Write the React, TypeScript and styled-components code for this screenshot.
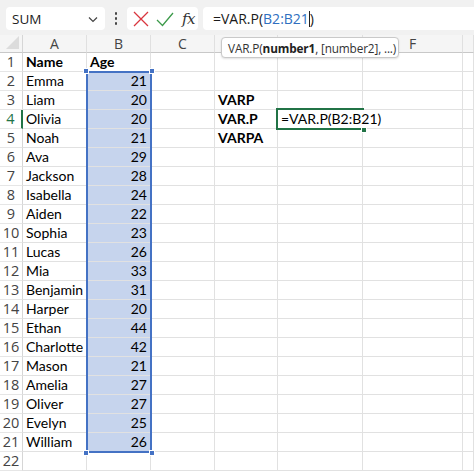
import React from "react";
import styled, { createGlobalStyle } from "styled-components";

const Global = createGlobalStyle`
  html, body { margin: 0; padding: 0; background: #ffffff; overflow: hidden; }
  * { box-sizing: border-box; }
`;

const Page = styled.div`
  width: 474px;
  height: 473px;
  overflow: hidden;
  background: #ffffff;
  font-family: "Open Sans", "Noto Sans", sans-serif;
`;

const Toolbar = styled.div`
  height: 35px;
  background: #f1f1f1;
  display: flex;
  align-items: flex-start;
  padding: 7px 0 0 6px;
`;

const Box = styled.div`
  height: 23px;
  background: #ffffff;
  border-radius: 4px;
  display: flex;
  align-items: center;
`;

const NameBox = styled(Box)`
  width: 99px;
  padding: 0 6px 0 6px;
  justify-content: space-between;
  font-size: 13.5px;
  color: #222;
`;

const Dots = styled.div`
  width: 22px;
  height: 23px;
  display: flex;
  flex-direction: column;
  align-items: center;
  justify-content: center;
  gap: 2.5px;
  & > span {
    width: 2.5px;
    height: 2.5px;
    border-radius: 50%;
    background: #444;
  }
`;

const ActionBox = styled(Box)`
  width: 71px;
  padding: 0 0 0 4px;
  gap: 4px;
`;

const Fx = styled.span`
  font-family: "DejaVu Serif", "Liberation Serif", serif;
  font-style: italic;
  font-size: 15px;
  color: #333;
  margin-left: 3px;
  letter-spacing: -0.5px;
`;

const FormulaBox = styled(Box)`
  flex: 1;
  margin-left: 5px;
  border-radius: 4px 0 0 4px;
  padding-left: 10px;
  font-size: 14px;
  color: #1a1a1a;
`;

const Ref = styled.span`
  color: #2f6fbf;
`;

const Caret = styled.span`
  display: inline-block;
  width: 1px;
  height: 16px;
  background: #222;
`;

const GridWrap = styled.div`
  position: relative;
`;

const Grid = styled.div`
  display: grid;
  grid-template-columns: 23px 64px 64px 64px 63px 85px 100px 1fr;
  grid-template-rows: 18px;
  grid-auto-rows: 19px;
`;

const Corner = styled.div`
  background: #f5f5f5;
  border-right: 1px solid #d6d6d6;
  border-bottom: 1px solid #c8c8c8;
  position: relative;
  &::after {
    content: "";
    position: absolute;
    right: 3px;
    bottom: 3px;
    border-left: 13px solid transparent;
    border-bottom: 13px solid #dcdcdc;
  }
`;

const ColHead = styled.div`
  background: #f5f5f5;
  border-right: 1px solid #e0e0e0;
  border-bottom: 1px solid #c8c8c8;
  display: flex;
  align-items: center;
  justify-content: center;
  font-size: 14px;
  color: #444;
  line-height: 1;
`;

const RowHead = styled.div<{ $active?: boolean }>`
  background: #ffffff;
  border-right: ${(p) => (p.$active ? "2px solid #217346" : "1px solid #d6d6d6")};
  border-bottom: 1px solid #e6e6e6;
  display: flex;
  align-items: center;
  justify-content: center;
  font-size: 14.5px;
  color: ${(p) => (p.$active ? "#217346" : "#444")};
  line-height: 1;
  padding-top: 1px;
`;

const Cell = styled.div<{ $num?: boolean; $bold?: boolean; $sel?: boolean; $front?: boolean }>`
  border-right: 1px solid #e1e1e1;
  border-bottom: 1px solid #e1e1e1;
  background: ${(p) => (p.$sel ? "#c6d4ed" : "#ffffff")};
  font-family: "Lato", "Liberation Sans", sans-serif;
  font-size: 14px;
  font-weight: ${(p) => (p.$bold ? 700 : 400)};
  color: #000;
  display: flex;
  align-items: flex-end;
  justify-content: ${(p) => (p.$num ? "flex-end" : "flex-start")};
  padding: 0 3px 1px 3px;
  white-space: nowrap;
  overflow: visible;
  line-height: 17px;
  position: relative;
  z-index: ${(p) => (p.$front ? 2 : 1)};
`;

const Spill = styled.span`
  background: #ffffff;
  padding-right: 4px;
`;

const Selection = styled.div`
  position: absolute;
  left: 86px;
  top: 36px;
  width: 66px;
  height: 382px;
  border: 2px solid #4472c4;
  pointer-events: none;
  z-index: 3;
`;

const Handle = styled.div<{ $pos: string; $color?: string }>`
  position: absolute;
  width: 6px;
  height: 6px;
  background: ${(p) => p.$color || "#4472c4"};
  border: 1px solid #ffffff;
  ${(p) => p.$pos}
`;

const Active = styled.div`
  position: absolute;
  left: 276px;
  top: 73px;
  width: 88px;
  height: 22px;
  border: 2px solid #217346;
  border-right: none;
  pointer-events: none;
  z-index: 3;
`;

const Tip = styled.div`
  position: absolute;
  left: 221px;
  top: 2px;
  width: 178px;
  height: 21px;
  background: #ffffff;
  border: 1px solid #c9c9c9;
  border-radius: 4px;
  box-shadow: 0 1px 2px rgba(0, 0, 0, 0.12);
  font-size: 11.8px;
  letter-spacing: -0.15px;
  color: #333;
  display: flex;
  align-items: center;
  padding-left: 6px;
  white-space: nowrap;
  z-index: 5;
  & b {
    font-weight: 700;
    color: #222;
  }
`;

const data: [string, number | null][] = [
  ["Emma", 21],
  ["Liam", 20],
  ["Olivia", 20],
  ["Noah", 21],
  ["Ava", 29],
  ["Jackson", 28],
  ["Isabella", 24],
  ["Aiden", 22],
  ["Sophia", 23],
  ["Lucas", 26],
  ["Mia", 33],
  ["Benjamin", 31],
  ["Harper", 20],
  ["Ethan", 44],
  ["Charlotte", 42],
  ["Mason", 21],
  ["Amelia", 27],
  ["Oliver", 27],
  ["Evelyn", 25],
  ["William", 26],
];

const dCol: Record<number, string> = { 3: "VARP", 4: "VAR.P", 5: "VARPA" };

export default function App() {
  const rows: React.ReactNode[] = [];
  for (let r = 1; r <= 22; r++) {
    const isData = r >= 2 && r <= 21;
    const d = isData ? data[r - 2] : null;
    rows.push(
      <React.Fragment key={r}>
        <RowHead $active={r === 4}>{r}</RowHead>
        <Cell $bold={r === 1}>{r === 1 ? "Name" : d ? d[0] : ""}</Cell>
        <Cell $bold={r === 1} $num={r !== 1} $sel={isData}>
          {r === 1 ? "Age" : d ? d[1] : ""}
        </Cell>
        <Cell />
        <Cell $bold>{dCol[r] || ""}</Cell>
        <Cell $front={r === 4}>{r === 4 ? <Spill>=VAR.P(B2:B21)</Spill> : ""}</Cell>
        <Cell />
        <Cell />
      </React.Fragment>
    );
  }
  return (
    <Page>
      <Global />
      <Toolbar>
        <NameBox>
          <span>SUM</span>
          <svg width="12" height="12" viewBox="0 0 12 12">
            <path d="M2 4.5 L6 8.5 L10 4.5" fill="none" stroke="#444" strokeWidth="1.2" />
          </svg>
        </NameBox>
        <Dots>
          <span />
          <span />
          <span />
        </Dots>
        <ActionBox>
          <svg width="20" height="20" viewBox="0 0 20 20">
            <path d="M3 3 L17 17 M17 3 L3 17" stroke="#d9363e" strokeWidth="1.3" fill="none" />
          </svg>
          <svg width="20" height="20" viewBox="0 0 20 20">
            <path d="M2 11 L7.5 16.5 L18 4" stroke="#3c9a4a" strokeWidth="1.3" fill="none" />
          </svg>
          <Fx>fx</Fx>
        </ActionBox>
        <FormulaBox>
          <span>=VAR.P(</span>
          <Ref>B2:B21</Ref>
          <Caret />
          <span>)</span>
        </FormulaBox>
      </Toolbar>
      <GridWrap>
        <Grid>
          <Corner />
          {["A", "B", "C", "", "", "F", ""].map((c, i) => (
            <ColHead key={i}>{c}</ColHead>
          ))}
          {rows}
        </Grid>
        <Selection>
          <Handle $pos="left:-5px; top:-5px;" />
          <Handle $pos="right:-5px; top:-5px;" />
          <Handle $pos="left:-5px; bottom:-5px;" />
          <Handle $pos="right:-5px; bottom:-5px;" />
        </Selection>
        <Active>
          <Handle $pos="right:-3px; bottom:-5px;" $color="#217346" />
        </Active>
        <Tip>
          VAR.P(<b>number1</b>, [number2], ...)
        </Tip>
      </GridWrap>
    </Page>
  );
}
